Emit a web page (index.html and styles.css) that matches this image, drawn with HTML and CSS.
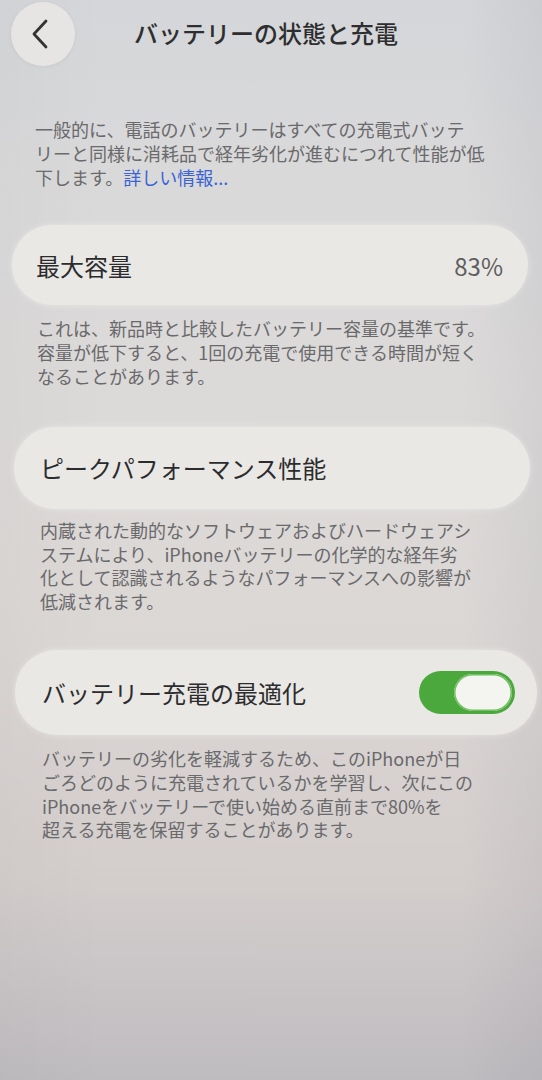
FILE: index.html
```html
<!DOCTYPE html>
<html lang="ja">
<head>
<meta charset="utf-8">
<link rel="stylesheet" href="styles.css">
</head>
<body>
<div class="screen">
  <header class="nav">
    <div class="back">
      <svg width="22" height="32" viewBox="0 0 22 32"><path d="M16 3 L4 16 L16 29" fill="none" stroke="#333" stroke-width="2.8" stroke-linecap="round" stroke-linejoin="round"/></svg>
    </div>
    <h1 class="title">バッテリーの状態と充電</h1>
  </header>

  <p class="desc intro">一般的に、電話のバッテリーはすべての充電式バッテ<br>リーと同様に消耗品で経年劣化が進むにつれて性能が低<br>下します。<span class="link">詳しい情報...</span></p>

  <div class="card c1">
    <span class="label">最大容量</span>
    <span class="value">83%</span>
  </div>
  <p class="desc d2">これは、新品時と比較したバッテリー容量の基準です。<br>容量が低下すると、1回の充電で使用できる時間が短く<br>なることがあります。</p>

  <div class="card c2">
    <span class="label">ピークパフォーマンス性能</span>
  </div>
  <p class="desc d3">内蔵された動的なソフトウェアおよびハードウェアシ<br>ステムにより、iPhoneバッテリーの化学的な経年劣<br>化として認識されるようなパフォーマンスへの影響が<br>低減されます。</p>

  <div class="card c3">
    <span class="label">バッテリー充電の最適化</span>
    <div class="toggle"><div class="knob"></div></div>
  </div>
  <p class="desc d4">バッテリーの劣化を軽減するため、このiPhoneが日<br>ごろどのように充電されているかを学習し、次にこの<br>iPhoneをバッテリーで使い始める直前まで80%を<br>超える充電を保留することがあります。</p>
</div>
</body>
</html>
```

FILE: styles.css
```css
html, body {
  margin: 0;
  padding: 0;
}
body {
  width: 542px;
  height: 1080px;
  overflow: hidden;
  font-family: "Noto Sans CJK JP", "Noto Sans", sans-serif;
  background: linear-gradient(180deg, #d4d6d9 0%, #d9d9da 15%, #dcdad9 35%, #dbd7d5 60%, #d3cdcc 82%, #bfbcc0 100%);
}
.screen {
  position: relative;
  height: 1080px;
  display: flex;
  flex-direction: column;
  background: linear-gradient(90deg, rgba(0,0,0,0.02) 0%, rgba(255,255,255,0) 20%, rgba(255,255,255,0) 85%, rgba(60,60,90,0.06) 100%);
}
.nav {
  height: 66px;
  display: flex;
  align-items: center;
  position: relative;
}
.back {
  width: 64px;
  height: 64px;
  margin-left: 11px;
  margin-top: 2px;
  border-radius: 50%;
  background: #e7e5e4;
  box-shadow: 0 1px 4px rgba(0,0,0,0.05);
  display: flex;
  align-items: center;
  justify-content: center;
  padding-right: 4px;
  box-sizing: border-box;
}
.title {
  position: absolute;
  left: 0;
  right: 0;
  top: 18px;
  margin: 0;
  text-align: center;
  font-size: 24px;
  line-height: 30px;
  font-weight: 500;
  color: #2e2e30;
  padding-right: 10px;
  pointer-events: none;
}
.desc {
  margin: 0;
  font-size: 18px;
  line-height: 23.8px;
  color: #6a696b;
  white-space: nowrap;
}
.intro {
  margin-top: 52px;
  padding-left: 35px;
}
.link {
  color: #3b63d6;
}
.card {
  display: flex;
  align-items: center;
  justify-content: space-between;
  background: #eae8e5;
  border-radius: 42px;
  box-shadow: 0 0 6px rgba(255,255,255,0.4);
}
.label {
  font-size: 24px;
  color: #2c2c2e;
  font-weight: 400;
}
.value {
  font-size: 24px;
  color: #5e5e60;
}
.c1 {
  margin: 36px 14px 0 12px;
  height: 80px;
  padding: 0 25px 0 24px;
}
.d2 {
  margin-top: 12px;
  padding-left: 37px;
}
.c2 {
  margin: 38px 12px 0 14px;
  height: 82px;
  padding: 0 26px;
}
.d3 {
  margin-top: 10px;
  padding-left: 40px;
}
.c3 {
  margin: 36px 5px 0 15px;
  height: 85px;
  padding: 0 22px 0 27px;
}
.d4 {
  margin-top: 12px;
  padding-left: 42px;
}
.toggle {
  width: 96px;
  height: 43px;
  border-radius: 22px;
  background: #4aa83c;
  position: relative;
}
.knob {
  position: absolute;
  right: 3px;
  top: 3px;
  width: 58px;
  height: 37px;
  border-radius: 19px;
  background: #f4f4f1;
  box-shadow: inset 0 0 0 1.5px #6fbf60;
}
```
